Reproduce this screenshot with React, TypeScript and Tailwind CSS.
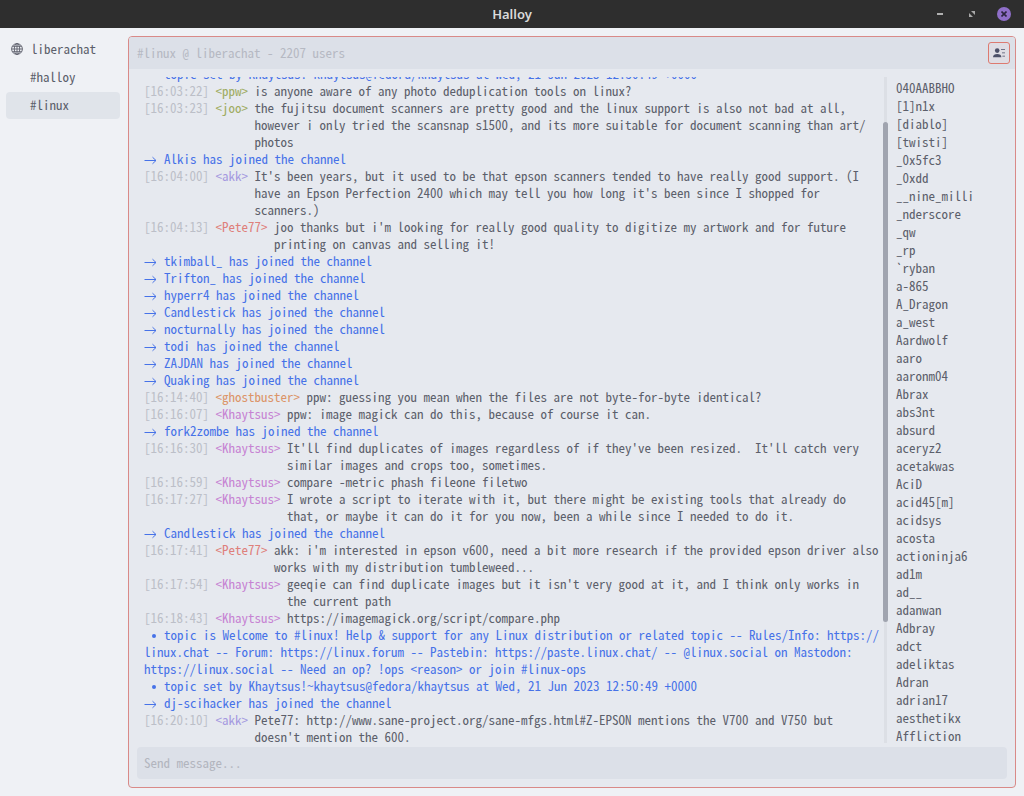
import React from "react";

type Entry =
  | { kind: "msg"; time: string; nick: string; color: string; text: string }
  | { kind: "join"; nick: string }
  | { kind: "topic"; text: string };

const GREEN = "text-[#9fac62]";
const LILAC = "text-[#a599e0]";
const RED = "text-[#df7f7b]";
const ORANGE = "text-[#dc9468]";
const PINK = "text-[#c683d3]";

const msg = (time: string, nick: string, color: string, text: string): Entry => ({
  kind: "msg",
  time,
  nick,
  color,
  text,
});
const join = (nick: string): Entry => ({ kind: "join", nick });
const topic = (text: string): Entry => ({ kind: "topic", text });

const SET_BY = "topic set by Khaytsus!~khaytsus@fedora/khaytsus at Wed, 21 Jun 2023 12:50:49 +0000";

const entries: Entry[] = [
  topic(SET_BY),
  msg("16:03:22", "ppw", GREEN, "is anyone aware of any photo deduplication tools on linux?"),
  msg(
    "16:03:23",
    "joo",
    GREEN,
    "the fujitsu document scanners are pretty good and the linux support is also not bad at all,\nhowever i only tried the scansnap s1500, and its more suitable for document scanning than art/\nphotos",
  ),
  join("Alkis"),
  msg(
    "16:04:00",
    "akk",
    LILAC,
    "It's been years, but it used to be that epson scanners tended to have really good support. (I\nhave an Epson Perfection 2400 which may tell you how long it's been since I shopped for\nscanners.)",
  ),
  msg(
    "16:04:13",
    "Pete77",
    RED,
    "joo thanks but i'm looking for really good quality to digitize my artwork and for future\nprinting on canvas and selling it!",
  ),
  join("tkimball_"),
  join("Trifton_"),
  join("hyperr4"),
  join("Candlestick"),
  join("nocturnally"),
  join("todi"),
  join("ZAJDAN"),
  join("Quaking"),
  msg("16:14:40", "ghostbuster", ORANGE, "ppw: guessing you mean when the files are not byte-for-byte identical?"),
  msg("16:16:07", "Khaytsus", PINK, "ppw: image magick can do this, because of course it can."),
  join("fork2zombe"),
  msg(
    "16:16:30",
    "Khaytsus",
    PINK,
    "It'll find duplicates of images regardless of if they've been resized.  It'll catch very\nsimilar images and crops too, sometimes.",
  ),
  msg("16:16:59", "Khaytsus", PINK, "compare -metric phash fileone filetwo"),
  msg(
    "16:17:27",
    "Khaytsus",
    PINK,
    "I wrote a script to iterate with it, but there might be existing tools that already do\nthat, or maybe it can do it for you now, been a while since I needed to do it.",
  ),
  join("Candlestick"),
  msg(
    "16:17:41",
    "Pete77",
    RED,
    "akk: i'm interested in epson v600, need a bit more research if the provided epson driver also\nworks with my distribution tumbleweed...",
  ),
  msg(
    "16:17:54",
    "Khaytsus",
    PINK,
    "geeqie can find duplicate images but it isn't very good at it, and I think only works in\nthe current path",
  ),
  msg("16:18:43", "Khaytsus", PINK, "https://imagemagick.org/script/compare.php"),
  topic(
    "topic is Welcome to #linux! Help & support for any Linux distribution or related topic -- Rules/Info: https://\nlinux.chat -- Forum: https://linux.forum -- Pastebin: https://paste.linux.chat/ -- @linux.social on Mastodon:\nhttps://linux.social -- Need an op? !ops <reason> or join #linux-ops",
  ),
  topic(SET_BY),
  join("dj-scihacker"),
  msg(
    "16:20:10",
    "akk",
    LILAC,
    "Pete77: http://www.sane-project.org/sane-mfgs.html#Z-EPSON mentions the V700 and V750 but\ndoesn't mention the 600.",
  ),
];

const users = [
  "040AABBHO", "[1]n1x", "[diablo]", "[twisti]", "_0x5fc3", "_0xdd", "__nine_milli", "_nderscore",
  "_qw", "_rp", "`ryban", "a-865", "A_Dragon", "a_west", "Aardwolf", "aaro", "aaronm04", "Abrax",
  "abs3nt", "absurd", "aceryz2", "acetakwas", "AciD", "acid45[m]", "acidsys", "acosta",
  "actioninja6", "ad1m", "ad__", "adanwan", "Adbray", "adct", "adeliktas", "Adran", "adrian17",
  "aesthetikx", "Affliction",
];

function Arrow() {
  return (
    <svg className="mr-[7px] inline-block h-[9px] w-[13px]" viewBox="0 0 13 9" fill="none" stroke="currentColor" aria-hidden="true">
      <path d="M0.5 4.5H12M8.5 1.2L12 4.5L8.5 7.8" />
    </svg>
  );
}

function Row({ entry }: { entry: Entry }) {
  if (entry.kind === "msg") {
    return (
      <li className="flex whitespace-pre">
        <span className="text-[#bcbfc8]">[{entry.time}] </span>
        <span className={entry.color}>{"<" + entry.nick + "> "}</span>
        <span>{entry.text}</span>
      </li>
    );
  }
  if (entry.kind === "join") {
    return (
      <li className="whitespace-pre text-[#4672e8]">
        <Arrow />
        {entry.nick} has joined the channel
      </li>
    );
  }
  return (
    <li className="whitespace-pre text-[#4672e8]">
      <svg className="mr-2 ml-2 inline-block h-1 w-1" viewBox="0 0 4 4" fill="currentColor" aria-hidden="true">
        <circle cx="2" cy="2" r="2" />
      </svg>
      {entry.text}
    </li>
  );
}

function GlobeIcon() {
  return (
    <svg className="size-3" viewBox="0 0 12 12" fill="none" stroke="currentColor" strokeWidth="0.9" aria-hidden="true">
      <circle cx="6" cy="6" r="5.4" />
      <ellipse cx="6" cy="6" rx="2.7" ry="5.4" />
      <path d="M6 0.6V11.4M0.6 6H11.4M1.4 3.3H10.6M1.4 8.7H10.6" />
    </svg>
  );
}

function PeopleIcon() {
  return (
    <svg className="h-[10px] w-3" viewBox="0 0 12 10" fill="#4d5068" aria-hidden="true">
      <circle cx="4.2" cy="2.6" r="2.3" />
      <path d="M0 9.2C0 6.8 1.8 5.9 4.2 5.9S8.4 6.8 8.4 9.2Z" />
      <path d="M8 1H12V1.8H8ZM9 4.4H12V5.2H9ZM9.4 7.8H12V8.6H9.4Z" />
    </svg>
  );
}

export default function App() {
  return (
    <div className="flex h-screen flex-col overflow-hidden bg-[#eff1f5] font-['Noto_Sans_Mono_CJK_JP','Liberation_Mono',monospace] text-[13px] leading-[17px] text-[#5c5f6b] slashed-zero">
      <header className="grid h-7 shrink-0 grid-cols-[1fr_auto_1fr] items-center bg-[#2e2e2e] px-[13px]">
        <h1 className="col-start-2 font-['Noto_Sans',sans-serif] text-[13px] font-semibold text-[#dadada]">Halloy</h1>
        <div className="flex items-center justify-end gap-[18px]">
          <button aria-label="Minimize" className="flex size-[14px] items-center justify-center">
            <span className="h-[2px] w-[6px] bg-[#b0b0b0]" />
          </button>
          <button aria-label="Restore" className="flex size-[14px] items-center justify-center">
            <svg className="size-[6px]" viewBox="0 0 6 6" fill="#a8a8a8" aria-hidden="true">
              <path d="M2 0H6V4ZM0 2L4 6H0Z" />
            </svg>
          </button>
          <button aria-label="Close" className="flex size-[14px] items-center justify-center rounded-full bg-[#8f6fc9]">
            <svg className="size-[6px]" viewBox="0 0 6 6" stroke="#2b2540" strokeWidth="1.6" aria-hidden="true">
              <path d="M0.5 0.5L5.5 5.5M5.5 0.5L0.5 5.5" />
            </svg>
          </button>
        </div>
      </header>

      <div className="flex min-h-0 flex-1 gap-2 p-2 pl-[6px]">
        <nav className="flex w-[114px] shrink-0 flex-col gap-[1px]">
          <a href="#liberachat" className="flex h-[27px] items-center gap-2 pb-[2px] pl-[5px]">
            <GlobeIcon />
            liberachat
          </a>
          <a href="#halloy" className="flex h-[27px] items-center pb-[2px] pl-6">#halloy</a>
          <a href="#linux" className="flex h-[27px] items-center rounded-[4px] bg-[#e0e4ea] pb-[2px] pl-6">#linux</a>
        </nav>

        <main className="flex min-w-0 flex-1 flex-col rounded-[4px] border border-[#d98a88] bg-[#e6e9ef]">
          <div className="flex h-8 shrink-0 items-center justify-between rounded-t-[3px] bg-[#dce0e8] pr-[5px] pl-2">
            <h2 className="pb-[2px] text-[#b6b9c3]">#linux @ liberachat - 2207 users</h2>
            <button aria-label="Toggle user list" className="flex size-[22px] items-center justify-center rounded-[3px] border border-[#dd7a70] bg-[#dfdde4]">
              <PeopleIcon />
            </button>
          </div>

          <div className="mt-2 mb-[2px] flex min-h-0 flex-1">
            <div className="flex min-w-0 flex-1 flex-col justify-end overflow-hidden pl-[15px]">
              <ul>
                {entries.map((entry, i) => (
                  <Row key={i} entry={entry} />
                ))}
              </ul>
            </div>
            <div className="mb-[2px] flex w-[5px] shrink-0 flex-col items-center bg-[linear-gradient(to_right,transparent_1px,#dcdfe5_1px,#dcdfe5_4px,transparent_4px)]">
              <div className="mt-[45px] h-[75%] w-full rounded-full bg-[#a0a4af]" />
            </div>
            <ul className="w-[127px] shrink-0 overflow-hidden pt-[2px] pl-2 leading-[18px]">
              {users.map((user) => (
                <li key={user}>{user}</li>
              ))}
            </ul>
          </div>

          <div className="px-2 pb-2">
            <input
              aria-label="Message"
              placeholder="Send message..."
              className="block h-8 w-full rounded-[4px] bg-[#dce0e8] px-[7px] pb-[2px] outline-none placeholder:text-[#b2b5be]"
            />
          </div>
        </main>
      </div>
    </div>
  );
}
